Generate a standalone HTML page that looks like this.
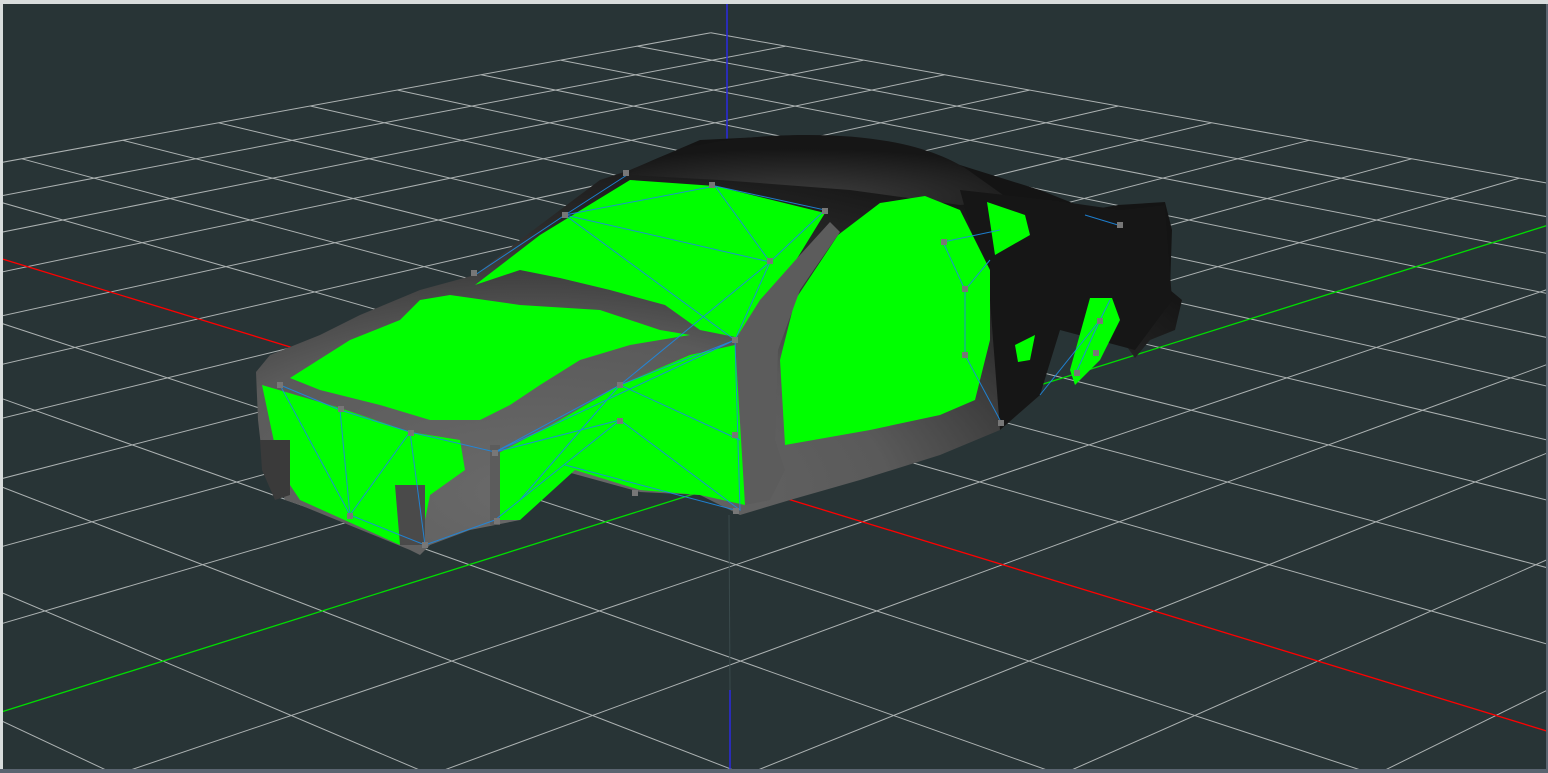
<!DOCTYPE html>
<html><head><meta charset="utf-8"><style>
html,body{margin:0;padding:0;background:#283436;overflow:hidden;width:1548px;height:773px}
#wrap{position:relative;width:1548px;height:773px;background:#d8dcdc;overflow:hidden}
#vp{position:absolute;left:3px;top:4px;width:1543px;height:765px;background:#283436;overflow:hidden}
#vp svg{display:block}
#bot{position:absolute;left:0;bottom:0;width:1548px;height:4px;background:#5a6470}
#rt{position:absolute;right:0;top:4px;width:2px;height:769px;background:#5a6470}
</style></head><body>
<div id="wrap"><div id="bot"></div><div id="rt"></div>
<div id="vp">
<svg id="s" width="1543" height="765" viewBox="3 4 1543 765" xmlns="http://www.w3.org/2000/svg">
<defs>
<radialGradient id="body" cx="0.3" cy="0.85" r="0.85">
<stop offset="0" stop-color="#6a6a6a"/><stop offset="0.45" stop-color="#5a5a5a"/><stop offset="0.75" stop-color="#2a2a2a"/><stop offset="1" stop-color="#141414"/>
</radialGradient>
<radialGradient id="roof" cx="0.45" cy="0.9" r="0.7">
<stop offset="0" stop-color="#3e3e3e"/><stop offset="1" stop-color="#161616"/>
</radialGradient>
</defs>
<g id="grid" stroke="#c4c8c8" stroke-width="1" opacity="0.85"></g>
<g id="axes"></g>
<path d="M1118,205 L1165,202 L1172,230 L1170,290 L1182,300 L1175,330 L1150,340 L1135,358 L1115,330 L1085,300 L1050,320 L1040,395 L1000,430 L940,455 L860,480 L790,500 L740,515 L700,495 L640,492 L560,470 L520,520 L470,530 L430,545 L420,555 L410,550 L300,505 L285,500 L278,480 L262,455 L258,420 L256,372 L270,355 L320,335 L360,315 L420,290 L475,275 L520,240 L560,210 L600,180 L630,170 L700,140 L800,135 L900,145 L960,165 L1040,190 L1090,210 Z" fill="url(#body)"/>
<path d="M628,175 C660,150 720,136 800,135 C880,134 940,148 975,175 L1010,200 L960,205 L850,190 L720,180 Z" fill="url(#roof)"/>
<path d="M960,190 L1050,200 L1120,210 L1165,205 L1172,300 L1135,350 L1060,330 L1040,395 L1000,430 L990,300 Z" fill="#161616"/>
<g fill="#00ff00">
<path d="M630,180 L715,186 L825,213 L790,270 L740,338 L700,330 L665,305 L610,290 L560,278 L520,270 L475,285 L540,235 Z"/>
<path d="M838,235 L880,203 L925,196 L960,210 L990,270 L990,340 L975,400 L940,415 L870,430 L785,445 L780,360 L795,300 Z"/>
<path d="M290,378 L350,340 L400,320 L420,300 L450,295 L520,305 L600,310 L660,330 L690,335 L630,345 L580,360 L540,385 L510,405 L480,420 L430,420 L380,405 L320,390 Z"/>
<path d="M262,385 L340,408 L410,432 L460,440 L465,470 L430,495 L420,545 L400,545 L300,500 L280,470 Z"/>
<path d="M495,455 L560,420 L620,385 L690,355 L735,345 L745,430 L745,505 L700,495 L640,490 L575,470 L520,520 L495,520 Z"/>
<path d="M987,202 L1025,215 L1030,235 L995,255 Z"/>
<path d="M1090,298 L1112,298 L1120,320 L1100,360 L1075,385 L1070,370 Z"/>
<path d="M1015,345 L1035,335 L1030,360 L1018,362 Z"/>
</g>
<g fill="#5c5c5c">
<path d="M735,340 L760,300 L800,255 L830,222 L840,232 L800,290 L778,350 L775,440 L785,470 L770,500 L745,505 Z"/>
<path d="M260,440 L290,440 L290,495 L275,500 L262,470 Z" fill="#3a3a3a"/>
<path d="M395,485 L425,485 L425,545 L400,545 Z" fill="#4a4a4a"/>
<path d="M490,445 L500,445 L500,525 L490,525 Z"/>
</g>
<g stroke="#1e88e0" stroke-width="1" fill="none" opacity="0.9">
<path d="M627,175 L565,215 L475,275 M565,215 L715,186 L770,262 L735,340 M715,186 L825,210 L770,262 L565,215 L735,340 M770,262 L620,385 M280,385 L340,410 L410,432 L495,452 L620,385 L735,340 L740,510 L620,420 L495,520 L425,545 L350,515 L280,385 M340,410 L350,515 L410,432 L425,545 M620,385 L740,440 M620,420 L495,452 M565,465 L735,510 M735,340 L495,452 M620,385 L520,500 M943,242 L965,290 L990,260 M965,290 L965,355 L1000,420 M943,242 L1000,230 M1100,320 L1040,395 M1100,320 L1075,375 M1100,320 L1110,300 M1085,215 L1118,225"/>
</g>
<g fill="#777">
<rect x="623" y="170" width="6" height="6"/><rect x="709" y="182" width="6" height="6"/><rect x="822" y="208" width="6" height="6"/>
<rect x="562" y="212" width="6" height="6"/><rect x="767" y="258" width="6" height="6"/><rect x="471" y="270" width="6" height="6"/>
<rect x="732" y="337" width="6" height="6"/><rect x="617" y="382" width="6" height="6"/><rect x="617" y="418" width="6" height="6"/>
<rect x="338" y="406" width="6" height="6"/><rect x="408" y="430" width="6" height="6"/><rect x="277" y="382" width="6" height="6"/>
<rect x="492" y="450" width="6" height="6"/><rect x="494" y="518" width="6" height="6"/><rect x="347" y="513" width="6" height="6"/>
<rect x="422" y="542" width="6" height="6"/><rect x="733" y="508" width="6" height="6"/><rect x="732" y="432" width="6" height="6"/>
<rect x="941" y="239" width="6" height="6"/><rect x="962" y="286" width="6" height="6"/><rect x="962" y="352" width="6" height="6"/>
<rect x="998" y="420" width="6" height="6"/><rect x="1117" y="222" width="6" height="6"/><rect x="1097" y="318" width="6" height="6"/>
<rect x="1074" y="370" width="6" height="6"/><rect x="1093" y="350" width="6" height="6"/><rect x="632" y="490" width="6" height="6"/>
</g>
</svg>
</div></div>
<script>
(function(){
var O=[732,482],V1=[-2808,-600],V2=[4170,-600],s1=0.0355,s2=0.0355,N=10;
function P(i,j){var d=1+i*s1+j*s2;return [(O[0]+i*s1*V1[0]+j*s2*V2[0])/d,(O[1]+i*s1*V1[1]+j*s2*V2[1])/d];}
function lo(k,sk,so){var m=Math.ceil((0.04-1-k*so)/sk);return Math.max(-N,m);}
var g=document.getElementById('grid'),a=document.getElementById('axes'),h='';
function L(p,q,c,w){return '<line x1="'+p[0].toFixed(1)+'" y1="'+p[1].toFixed(1)+'" x2="'+q[0].toFixed(1)+'" y2="'+q[1].toFixed(1)+'"'+(c?' stroke="'+c+'" stroke-width="'+w+'"':'')+'/>';}
for(var j=-N;j<=N;j++){var m=lo(j,s1,s2);if(m>N)continue;if(j!==0)h+=L(P(m,j),P(N,j));}
for(var i=-N;i<=N;i++){var m=lo(i,s2,s1);if(m>N)continue;if(i!==0)h+=L(P(i,m),P(i,N));}
g.innerHTML=h;
var ax='';
ax+=L(P(lo(0,s1,s2),0),P(N,0),'#ff0000',1.3);
ax+=L(P(0,lo(0,s2,s1)),P(0,N),'#00dd00',1.3);
ax+='<line x1="727" y1="4" x2="727" y2="140" stroke="#2a2ae0" stroke-width="1.5"/>';
ax+='<line x1="729" y1="515" x2="730" y2="690" stroke="#3a4a4c" stroke-width="1"/>';
ax+='<line x1="730" y1="690" x2="730" y2="770" stroke="#2a2ae0" stroke-width="1.5"/>';
a.innerHTML=ax;
})();
</script>
</body></html>
